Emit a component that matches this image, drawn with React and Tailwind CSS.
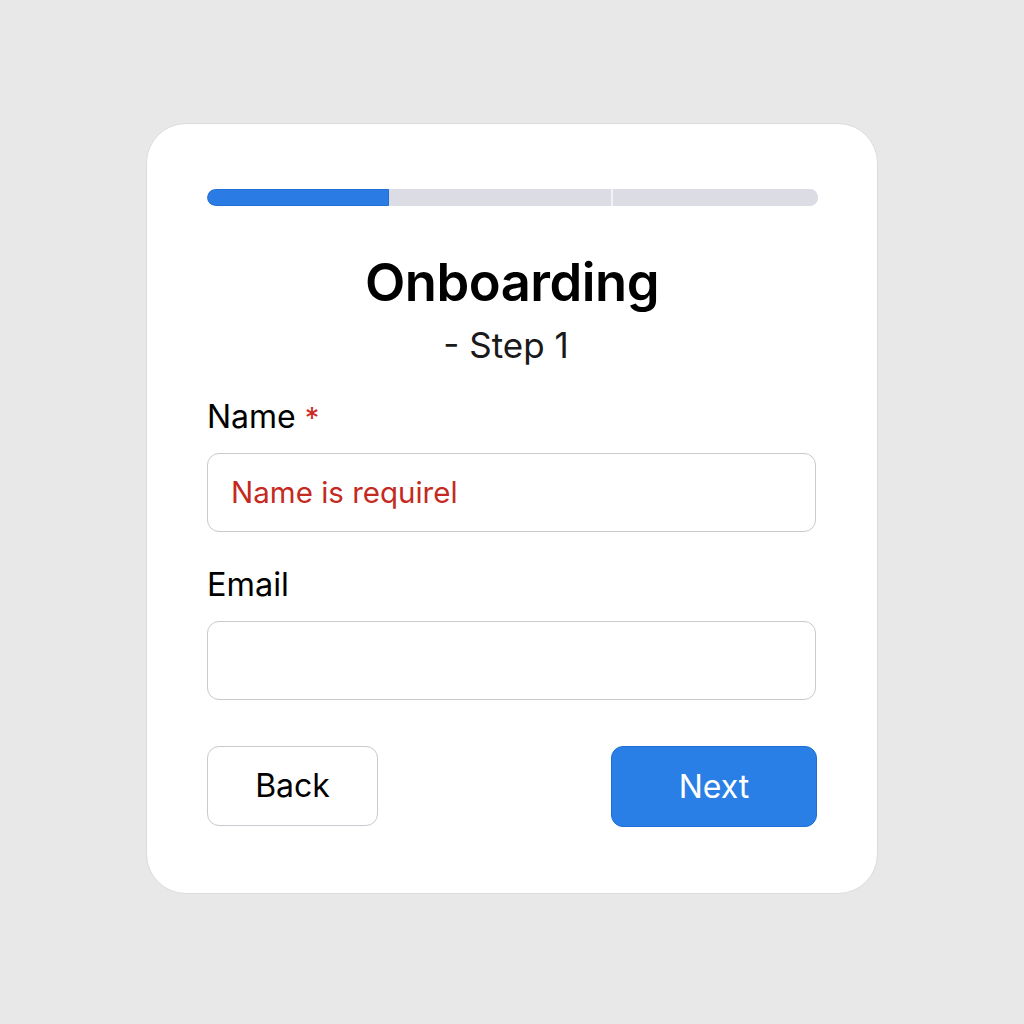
export default function App() {
  return (
    <div className="w-[1024px] h-[1024px] bg-[#e8e8e8] flex items-start justify-center pt-[123px]" style={{ fontFamily: 'Inter, "Noto Sans", sans-serif' }}>
      <div className="w-[732px] h-[771px] bg-white rounded-[40px] border border-[#dcdcdc] px-[60px] pt-[65px] flex flex-col">
        <div className="flex h-[17px] w-[611px] rounded-full overflow-hidden bg-[#dcdde4]">
          <div className="w-[182px] h-full bg-[#2a7be4] border border-[#1f6fd6] rounded-l-full"></div>
          <div className="w-[222px] h-full bg-[#dcdde4]"></div>
          <div className="w-[2px] h-full bg-[#f2f2f5]"></div>
          <div className="flex-1 h-full bg-[#dcdde4]"></div>
        </div>
        <h1 className="mt-[46px] text-center text-[52.5px] leading-[60px] font-semibold text-black tracking-[-0.5px]">Onboarding</h1>
        <p className="mt-[13px] pr-[12px] text-center text-[35px] leading-[40px] text-[#1a1a1a]">- Step 1</p>
        <label className="mt-[34px] text-[32px] leading-[36px] text-black">
          Name <span className="text-[#cc2a24] text-[29px]">*</span>
        </label>
        <div className="mt-[17px] h-[79px] w-[609px] rounded-[12px] border border-[#c9c9cf] flex items-center px-[23px]">
          <span className="text-[29.5px] text-[#c42a22]">Name is requirel</span>
        </div>
        <label className="mt-[35px] text-[32.5px] leading-[36px] text-black">Email</label>
        <div className="mt-[18px] h-[79px] w-[609px] rounded-[12px] border border-[#c9c9cf]"></div>
        <div className="mt-[46px] flex justify-between w-[610px]">
          <button className="w-[171px] h-[80px] rounded-[12px] border border-[#c9c9cf] bg-white text-[32px] text-black">Back</button>
          <button className="w-[206px] h-[81px] rounded-[12px] border border-[#1f6fd6] bg-[#2a7fe6] text-[32px] text-white">Next</button>
        </div>
      </div>
    </div>
  );
}
